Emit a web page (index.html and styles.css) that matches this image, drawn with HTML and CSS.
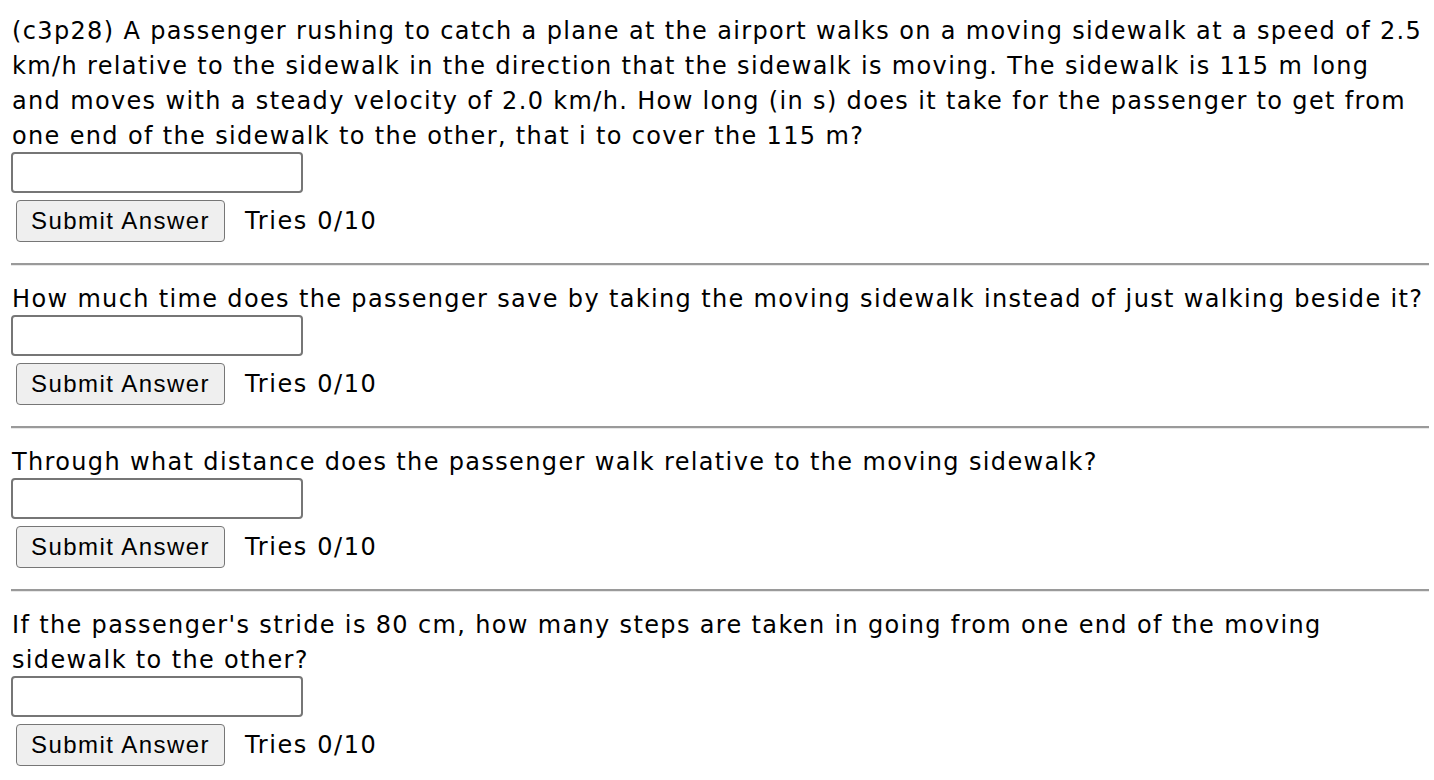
FILE: index.html
```html
<!DOCTYPE html>
<html lang="en">
<head>
  <meta charset="UTF-8">
  <title>c3p28</title>
  <link rel="stylesheet" href="styles.css">
</head>
<body>

<!-- Part 1 -->
<div class="problem">
  <p class="question">(c3p28) A passenger rushing to catch a plane at the airport walks on a moving sidewalk at a speed of 2.5 km/h relative to the sidewalk in the direction that the sidewalk is moving. The sidewalk is 115 m long and moves with a steady velocity of 2.0 km/h. How long (in s) does it take for the passenger to get from one end of the sidewalk to the other, that i to cover the 115 m?</p>
  <input type="text" class="answer">
  <div class="submit-row">
    <button class="submit">Submit Answer</button>
    <span class="tries">Tries 0/10</span>
  </div>
</div>
<hr>

<!-- Part 2 -->
<div class="problem">
  <p class="question">How much time does the passenger save by taking the moving sidewalk instead of just walking beside it?</p>
  <input type="text" class="answer">
  <div class="submit-row">
    <button class="submit">Submit Answer</button>
    <span class="tries">Tries 0/10</span>
  </div>
</div>
<hr>

<!-- Part 3 -->
<div class="problem">
  <p class="question">Through what distance does the passenger walk relative to the moving sidewalk?</p>
  <input type="text" class="answer">
  <div class="submit-row">
    <button class="submit">Submit Answer</button>
    <span class="tries">Tries 0/10</span>
  </div>
</div>
<hr>

<!-- Part 4 -->
<div class="problem">
  <p class="question">If the passenger's stride is 80 cm, how many steps are taken in going from one end of the moving sidewalk to the other?</p>
  <input type="text" class="answer">
  <div class="submit-row">
    <button class="submit">Submit Answer</button>
    <span class="tries">Tries 0/10</span>
  </div>
</div>

</body>
</html>
```

FILE: styles.css
```css
* {
  margin: 0;
  padding: 0;
  box-sizing: border-box;
}

body {
  background: #fff;
  color: #000;
  font-family: "DejaVu Sans", Verdana, sans-serif;
  font-size: 24px;
  line-height: 35px;
  letter-spacing: 1.35px;
  padding: 13.5px 5px 0 12px;
}

.problem {
  display: flex;
  flex-direction: column;
  align-items: flex-start;
}

.question {
  width: 1413px;
  margin-bottom: -2px;
}

.answer {
  width: 292px;
  height: 41px;
  margin-left: -1px;
  border: 2px solid #767676;
  border-radius: 4px;
  background: #fff;
  font-size: 24px;
}

.submit-row {
  display: flex;
  align-items: baseline;
  gap: 20px;
  margin-top: 7px;
  margin-left: 4px;
}

.submit {
  width: 209px;
  height: 42px;
  border: 1.5px solid #767676;
  border-radius: 4px;
  background: #efefef;
  color: #000;
  font-family: "Liberation Sans", Arial, sans-serif;
  font-size: 24px;
  letter-spacing: 1.45px;
}

.tries {
  line-height: 35px;
  letter-spacing: 1.6px;
}

hr {
  margin: 21px 0 16px -1.5px;
  border: none;
  border-top: 2px solid #9a9a9a;
  border-bottom: 1px solid #e8e8e8;
}
```
